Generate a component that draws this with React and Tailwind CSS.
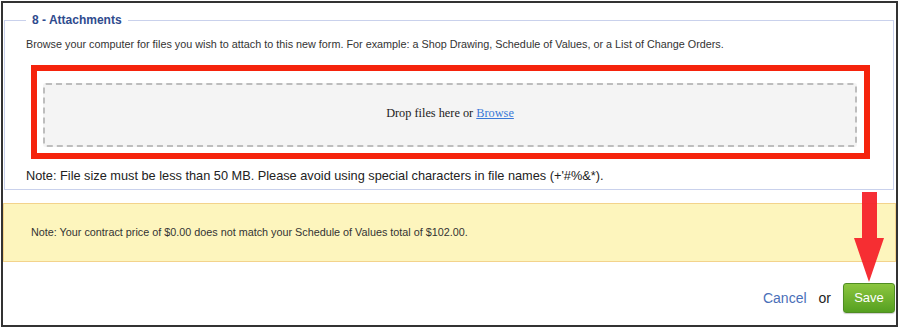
import React from "react";

export default function App() {
  return (
    <div className="relative w-[903px] h-[329px] bg-white font-['Liberation_Sans',Arial,sans-serif]">
      <div className="absolute left-[1px] top-[1px] w-[897px] h-[326px] border-2 border-[#333] bg-white flex flex-col">
        <fieldset className="ml-[1px] mr-[2px] mt-[9px] border border-[#c9d1ec] pl-[21px] pr-0 pb-[5px]">
          <legend className="ml-[0px] px-[6px] text-[12px] leading-[16px] font-bold text-[#2f4b8e]">8 - Attachments</legend>
          <p className="mt-[8px] text-[10.8px] leading-[16px] text-[#333]">
            Browse your computer for files you wish to attach to this new form. For example: a Shop Drawing, Schedule of Values, or a List of Change Orders.
          </p>
          <div className="ml-[5px] mt-[13px] w-[839px] h-[94px] border-[6px] border-[#f5230c] pt-[12px] pl-[6px] pr-[7px]">
            <div className="h-[64px] rounded-[3px] border-2 border-dashed border-[#bdbdbd] bg-[#f4f4f4] flex items-center justify-center pb-[3px] font-['Liberation_Serif','Times_New_Roman',serif] text-[12.3px] text-[#222]">
              <span>
                Drop files here or <span className="text-[#3a78d8] underline">Browse</span>
              </span>
            </div>
          </div>
          <p className="mt-[9px] text-[12.75px] leading-[16px] text-[#222]">
            Note: File size must be less than 50 MB. Please avoid using special characters in file names (+'#%&amp;*).
          </p>
        </fieldset>
        <div className="mt-[13px] h-[59px] border border-[#f3d38c] bg-[#fdf5bd] flex items-center pl-[27px] text-[10.8px] text-[#333]">
          Note: Your contract price of $0.00 does not match your Schedule of Values total of $102.00.
        </div>
        <div className="mt-[21px] flex items-center justify-end pr-[1px]">
          <a className="text-[14px] text-[#4a6fb8]">Cancel</a>
          <span className="ml-[12px] mr-[12px] text-[14px] text-[#222]">or</span>
          <button className="w-[52px] h-[30px] rounded-[3px] border border-[#4f8d22] bg-gradient-to-b from-[#8cc63f] to-[#55a020] text-white text-[13px] shadow-[0_1px_1px_rgba(0,0,0,0.2)]">
            Save
          </button>
        </div>
      </div>
      <svg className="absolute left-[852px] top-[190px]" width="34" height="94" viewBox="0 0 34 94">
        <path d="M10 2 H25 V48 H32 L17 92 L2 48 H10 Z" fill="#f5232a" fillOpacity="0.95" />
      </svg>
    </div>
  );
}
